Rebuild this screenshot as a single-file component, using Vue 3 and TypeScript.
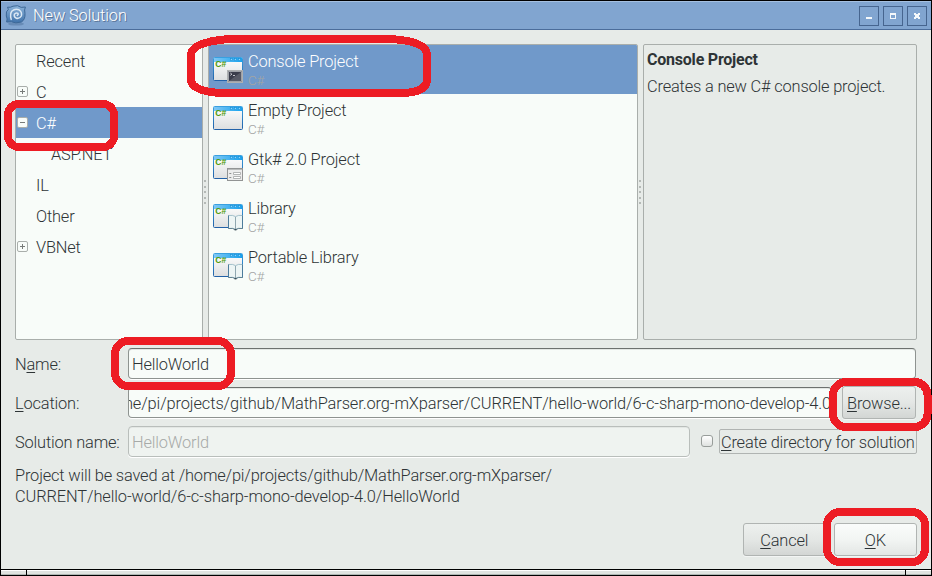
<script setup lang="ts">
type Kind = 'console' | 'empty' | 'gtk' | 'library'

interface Category {
  label: string
  expander?: 'plus' | 'minus'
  child?: boolean
  selected?: boolean
}

interface Template {
  label: string
  kind: Kind
  selected?: boolean
}

const categories: Category[] = [
  { label: 'Recent' },
  { label: 'C', expander: 'plus' },
  { label: 'C#', expander: 'minus', selected: true },
  { label: 'ASP.NET', child: true },
  { label: 'IL' },
  { label: 'Other' },
  { label: 'VBNet', expander: 'plus' },
]

const templates: Template[] = [
  { label: 'Console Project', kind: 'console', selected: true },
  { label: 'Empty Project', kind: 'empty' },
  { label: 'Gtk# 2.0 Project', kind: 'gtk' },
  { label: 'Library', kind: 'library' },
  { label: 'Portable Library', kind: 'library' },
]
</script>

<template>
  <div class="window">
    <header class="titlebar">
      <svg class="logo" width="22" height="22" viewBox="0 0 22 22">
        <defs>
          <linearGradient id="logo-fill" x1="0" y1="0" x2="0" y2="1">
            <stop offset="0" stop-color="#8db4da" />
            <stop offset="1" stop-color="#3f72aa" />
          </linearGradient>
        </defs>
        <ellipse cx="11" cy="20" rx="8" ry="1.6" fill="#577aa5" opacity=".6" />
        <path d="M2.5 3.2 Q5.5 3.8 8 2.2 Q13 .6 16.2 3.4 L20.4 3 Q19 5.5 20 9.5 Q20.4 15.5 16.4 18 Q10.5 19.8 6.4 17.8 L1.6 18 Q2.8 15 1.3 12 Q.6 7 3.4 5.4 Z" fill="url(#logo-fill)" stroke="#3d6897" stroke-width="1" />
        <path d="M6.2 15.4 Q4.6 10 7 7 Q10 4.400 14 5.800 Q17.400 8 16.300 12 Q14.600 15 11.200 14.200 Q8.600 12.800 9.400 10.200 Q11 8.200 13 9.400 Q13.700 10.800 12.300 11.500" fill="none" stroke="#dbe8f4" stroke-width="1.5" stroke-linecap="round" />
      </svg>
      <h1>New Solution</h1>
      <div class="controls">
        <span class="control"><svg width="18" height="18"><rect x="6" y="11" width="6" height="2" fill="#f4f8fb" /></svg></span>
        <span class="control"><svg width="18" height="18"><path d="M6 7h6v6H6zM7 9v3h4V9z" fill="#f4f8fb" fill-rule="evenodd" /></svg></span>
        <span class="control"><svg width="18" height="18"><path d="M6 7h2v1h2V7h2v2h-1v2h1v2h-2v-1H8v1H6v-2h1V9H6z" fill="#f4f8fb" /></svg></span>
      </div>
    </header>

    <main class="content">
      <section class="panes">
        <div class="pane categories">
          <div v-for="c in categories" :key="c.label" class="category" :class="{ selected: c.selected, child: c.child }">
            <span class="slot">
              <svg v-if="c.expander" width="11" height="11">
                <rect x=".5" y=".5" width="10" height="10" rx="1.5" fill="#f8fcf9" stroke="#a9aeab" />
                <path :d="c.expander === 'plus' ? 'M3 5.5h5M5.5 3v5' : 'M3 5.5h5'" stroke="#777b79" fill="none" />
              </svg>
            </span>
            <span>{{ c.label }}</span>
          </div>
        </div>
        <div class="grip"><i v-for="n in 5" :key="n"></i></div>
        <div class="pane templates">
          <div v-for="t in templates" :key="t.label" class="template" :class="{ selected: t.selected }">
            <svg class="icon" width="30" height="27" viewBox="0 0 30 27">
              <defs>
                <linearGradient id="bar" x1="0" x2="1"><stop offset="0" stop-color="#80c8f5" /><stop offset="1" stop-color="#16a2ee" /></linearGradient>
                <linearGradient id="sheet" x1="0" y1="0" x2="0" y2="1"><stop offset="0" stop-color="#fff" /><stop offset="1" stop-color="#dcdedf" /></linearGradient>
                <linearGradient id="edge" x1="0" y1="0" x2="0" y2="1"><stop offset="0" stop-color="#39a0e0" /><stop offset="1" stop-color="#2261a8" /></linearGradient>
              </defs>
              <rect x=".5" y=".5" width="29" height="23" rx="1" fill="url(#sheet)" stroke="url(#edge)" />
              <rect x="1" y="1" width="28" height="4" fill="url(#bar)" />
              <g fill="#8ad6ff" stroke="#1c8fd4" stroke-width=".6"><rect x="17.4" y="1.6" width="2" height="2" /><rect x="21.4" y="1.6" width="2" height="2" /><rect x="25.4" y="1.6" width="2" height="2" /></g>
              <text x="2.2" y="9.8" textLength="11" lengthAdjust="spacingAndGlyphs" class="badge">C#</text>
              <g v-if="t.kind === 'console'">
                <rect x="14.5" y="13.5" width="15" height="12" fill="#3b3d4b" stroke="#aeb0b1" />
                <path d="M15.5 14.5h13v10h-13z" fill="none" stroke="#e4e5e5" stroke-width=".6" />
                <path d="M16 24L28 15v9z" fill="#585a66" />
                <path d="M17.3 16l1.6 1.2-1.6 1.2M20 18.5h2" stroke="#e9e9ee" fill="none" stroke-width=".8" />
              </g>
              <g v-else-if="t.kind === 'gtk'">
                <rect x="14.5" y="13.5" width="15" height="12" fill="#ececec" stroke="#929494" />
                <path d="M15 14.5h14" stroke="#b9bbbb" />
                <path d="M16.3 18.5h2M16.3 22.5h2" stroke="#8d8f8f" />
                <path d="M20.5 17.5h7v2h-7zM20.5 21.5h7v2h-7z" fill="#fff" stroke="#a1a3a3" stroke-width=".8" />
              </g>
              <g v-else-if="t.kind === 'library'">
                <path d="M15.5 11.5Q20 10.8 22.5 12.6Q25 10.8 29.5 11.5V24.5Q25 23.8 22.5 25.6Q20 23.8 15.5 24.5Z" fill="#edf5f5" stroke="#8fb2c0" stroke-width=".8" />
                <path d="M15.5 11.5V24.5M29.5 11.5V24.5" stroke="#4c7c9c" />
                <path d="M22.5 13v12" stroke="#90a7b0" />
                <path d="M15.500 24.500Q20 23.800 22.500 25.600Q25 23.800 29.500 24.500" fill="none" stroke="#4d6f80" stroke-width=".8" />
                <path d="M21.5 25.8h2" stroke="#1c2b34" />
              </g>
            </svg>
            <div class="names">
              <span class="label">{{ t.label }}</span>
              <span class="language">C#</span>
            </div>
          </div>
        </div>
        <div class="grip"><i v-for="n in 5" :key="n"></i></div>
        <aside class="pane details">
          <strong>Console Project</strong>
          <p>Creates a new C# console project.</p>
        </aside>
      </section>

      <section class="form">
        <div class="row">
          <label>N<u>a</u>me:</label>
          <div class="field"><span>HelloWorld</span></div>
        </div>
        <div class="row location">
          <label><u>L</u>ocation:</label>
          <div class="field path"><span>/home/pi/projects/github/MathParser.org-mXparser/CURRENT/hello-world/6-c-sharp-mono-develop-4.0</span></div>
          <button class="browse"><u>B</u>rowse...</button>
        </div>
        <div class="row solution">
          <label>Solution name:</label>
          <div class="field disabled"><span>HelloWorld</span></div>
          <span class="check"></span>
          <span class="check-label"><u>C</u>reate directory for solution</span>
        </div>
        <p class="summary"><span class="line1">Project will be saved at /home/pi/projects/github/MathParser.org-mXparser/</span><br /><span class="line2">CURRENT/hello-world/6-c-sharp-mono-develop-4.0/HelloWorld</span></p>
      </section>

      <footer class="actions">
        <button class="cancel"><u>C</u>ancel</button>
        <button class="ok"><u>O</u>K</button>
      </footer>
    </main>
    <div class="frame"><i></i><i></i><i></i></div>

    <svg class="marks" width="932" height="576" viewBox="0 0 932 576" fill="none" stroke="#ed1c24" stroke-width="8" shape-rendering="crispEdges">
      <rect x="8" y="104" width="106" height="43" rx="11" />
      <path d="M229 39H390Q427 41 427 55V79Q427 93 400 93H220Q191 91 191 79V55Q191 42 229 39Z" />
      <rect x="115" y="341" width="116" height="45" rx="13" />
      <rect x="833" y="382" width="94.5" height="45" rx="13" />
      <rect x="827" y="512" width="98" height="50" rx="13" />
    </svg>
  </div>
</template>

<style>
body { background: #000; overflow: hidden; }
</style>

<style scoped>
* { box-sizing: border-box; }
.window {
  position: relative;
  width: 932px;
  height: 576px;
  padding: 1px;
  background: #000;
  color: #2e3436;
  font: 300 16.4px/20px Roboto, sans-serif;
  letter-spacing: -.17px;
  display: flex;
  flex-direction: column;
  overflow: hidden;
  white-space: nowrap;
}
u { text-decoration: underline; text-underline-offset: 2px; text-decoration-thickness: 1px; text-decoration-skip-ink: none; }
.titlebar {
  height: 29px;
  display: flex;
  align-items: center;
  padding: 0 4px;
  background: #81a5d0;
  border-top: 1px solid #a5c0e0;
  border-bottom: 1px solid #4b6d9b;
}
.logo { flex: none; margin-top: -1px; }
h1 { flex: 1; margin: 0 0 0 6px; font: 300 16.4px/20px Roboto, sans-serif; letter-spacing: -.12px; color: #fff; text-shadow: 1px 1px #5c7698; }
.controls { display: flex; gap: 4px; }
.control { width: 20px; height: 20px; border: 1px solid #46658f; }
.control svg { display: block; margin-top: -1px; }
.content { height: 539px; background: #e7ebe8; padding: 14px 14px 0; display: flex; flex-direction: column; }
.panes { height: 296px; display: flex; }
.pane { border: 1px solid #a9aeab; border-radius: 2px; background: #f8fcf9; overflow: hidden; }
.categories { width: 188px; }
.grip { width: 5px; display: flex; flex-direction: column; align-items: center; justify-content: center; gap: 3.5px; padding-right: 1px; }
.grip i { width: 2px; height: 2px; background: #b4b9b6; }
.category { height: 31px; display: flex; align-items: center; padding: 2px 0 0 1px; }
.slot { width: 19px; height: 11px; display: flex; margin-top: -2px; }
.child .slot { width: 34px; }
.selected { background: #7099ca; color: #fff; }
.templates { width: 430px; }
.template { height: 49px; display: flex; padding: 7px 0 0 4px; }
.icon { margin-top: 5px; flex: none; }
.badge { font: bold 8.5px "Liberation Sans", sans-serif; letter-spacing: 0; fill: #4e9a06; }
.names { margin-left: 5px; display: flex; flex-direction: column; }
.language { font-size: 13.5px; line-height: 17px; letter-spacing: -.2px; color: #a3a5a4; }
.details { flex: 1; background: transparent; padding: 5px 3px; }
.details strong { display: block; font-weight: 700; font-size: 16px; letter-spacing: -.22px; }
.details p { margin: 7px 0 0; }
.form { padding-top: 8px; display: flex; flex-direction: column; gap: 8px; }
.row { height: 31px; display: flex; align-items: center; }
.row label { width: 112.5px; margin-right: .5px; padding-top: 2px; flex: none; }
.field { flex: none; width: 788px; height: 31px; padding: 6px 3px 0; border: 1px solid #8e9390; border-top-color: #6d716f; border-radius: 4px; background: #f8fcf9; box-shadow: 0 1px #fff, inset 0 1px #e3e7e4; overflow: hidden; }
.path { width: 704px; padding: 6px 0 0; display: flex; justify-content: flex-end; letter-spacing: -.11px; }
.disabled { width: 562px; background: #eff3f0; border-color: #b9bebb; color: #a7aaa8; }
button { font: inherit; letter-spacing: inherit; color: inherit; height: 33px; padding: 2px 0 0; border: 1px solid #b0b4b2; border-radius: 3px; background: linear-gradient(#edf0ee, #e4e7e5 50%, #d3d6d4); box-shadow: 0 1px #f3f5f4; }
.browse { width: 74px; margin-left: 10px; }
.check { width: 12px; height: 12px; margin: -1px 0 0 11px; border: 1px solid #989d9a; border-radius: 3px; background: linear-gradient(#fff, #dfe2e0); }
.check-label { width: 198px; height: 25px; margin-left: 6px; padding: 3px 1px; border: 1px solid #b0b4b2; border-radius: 2px; letter-spacing: -.2px; }
.summary { margin: 0; line-height: 21px; }
.line2 { letter-spacing: -.11px; }
.actions { margin-top: 16px; display: flex; gap: 8px; }
.cancel { width: 83px; margin-left: 728px; }
.ok { width: 84px; background: linear-gradient(#fafcfb, #f2f5f3 50%, #e3e6e4); }
.frame { margin-top: 1px; display: flex; gap: 1px; height: 5px; }
.frame i { background: #dfe3e0; border-top: 1px solid #fff; border-bottom: 1px solid #aeb6b3; }
.frame i:first-child { width: 25px; }
.frame i:nth-child(2) { flex: 1; }
.frame i:last-child { width: 25px; }
.marks { position: absolute; inset: 0; pointer-events: none; }
</style>
